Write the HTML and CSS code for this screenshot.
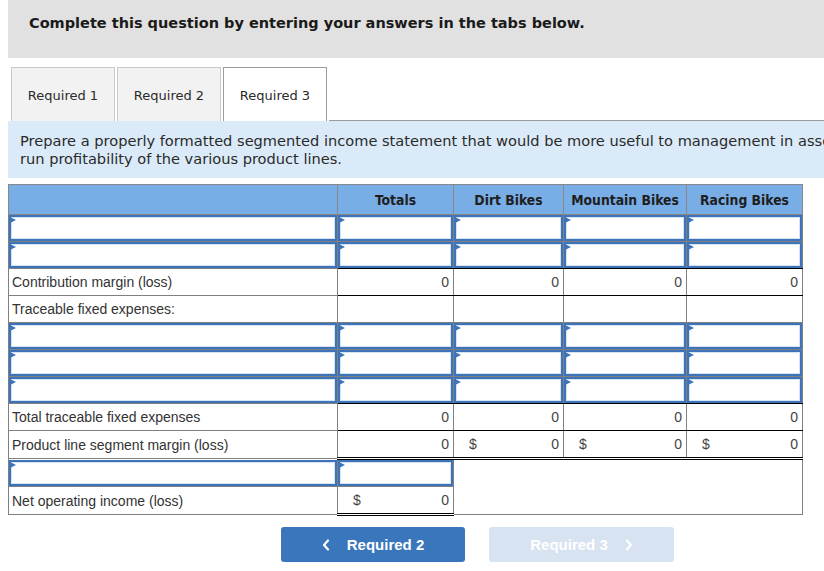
FILE: index.html
```html
<!DOCTYPE html>
<html lang="en">
<head>
<meta charset="utf-8">
<title>Segmented income statement</title>
<link rel="stylesheet" href="styles.css">
</head>
<body>
<div class="page">
  <div class="banner">Complete this question by entering your answers in the tabs below.</div>

  <div class="tabs">
    <div class="tab">Required 1</div>
    <div class="tab">Required 2</div>
    <div class="tab active">Required 3</div>
    <div class="tab-rest"></div>
  </div>

  <div class="prompt">Prepare a properly formatted segmented income statement that would be more useful to management in assessing the long-<br>run profitability of the various product lines.</div>

  <table class="stmt">
    <colgroup>
      <col class="c-label"><col class="c-tot"><col class="c-dirt"><col class="c-mtn"><col class="c-race">
    </colgroup>
    <thead>
      <tr><th></th><th>Totals</th><th>Dirt Bikes</th><th>Mountain Bikes</th><th>Racing Bikes</th></tr>
    </thead>
    <tbody>
      <tr>
        <td class="inp"><div class="box"></div></td>
        <td class="inp"><div class="box"></div></td>
        <td class="inp"><div class="box"></div></td>
        <td class="inp"><div class="box"></div></td>
        <td class="inp"><div class="box"></div></td>
      </tr>
      <tr>
        <td class="inp"><div class="box"></div></td>
        <td class="inp bb"><div class="box"></div></td>
        <td class="inp bb"><div class="box"></div></td>
        <td class="inp bb"><div class="box"></div></td>
        <td class="inp bb"><div class="box"></div></td>
      </tr>
      <tr>
        <td class="lbl">Contribution margin (loss)</td>
        <td class="num bt bb">0</td>
        <td class="num bt bb">0</td>
        <td class="num bt bb">0</td>
        <td class="num bt bb">0</td>
      </tr>
      <tr>
        <td class="lbl">Traceable fixed expenses:</td>
        <td class="num bt"></td>
        <td class="num bt"></td>
        <td class="num bt"></td>
        <td class="num bt"></td>
      </tr>
      <tr>
        <td class="inp"><div class="box"></div></td>
        <td class="inp"><div class="box"></div></td>
        <td class="inp"><div class="box"></div></td>
        <td class="inp"><div class="box"></div></td>
        <td class="inp"><div class="box"></div></td>
      </tr>
      <tr>
        <td class="inp"><div class="box"></div></td>
        <td class="inp"><div class="box"></div></td>
        <td class="inp"><div class="box"></div></td>
        <td class="inp"><div class="box"></div></td>
        <td class="inp"><div class="box"></div></td>
      </tr>
      <tr>
        <td class="inp"><div class="box"></div></td>
        <td class="inp bb"><div class="box"></div></td>
        <td class="inp bb"><div class="box"></div></td>
        <td class="inp bb"><div class="box"></div></td>
        <td class="inp bb"><div class="box"></div></td>
      </tr>
      <tr>
        <td class="lbl">Total traceable fixed expenses</td>
        <td class="num bt bb">0</td>
        <td class="num bt bb">0</td>
        <td class="num bt bb">0</td>
        <td class="num bt bb">0</td>
      </tr>
      <tr>
        <td class="lbl">Product line segment margin (loss)</td>
        <td class="num bt dbl">0</td>
        <td class="num bt dbl"><span class="cur">$</span>0</td>
        <td class="num bt dbl"><span class="cur">$</span>0</td>
        <td class="num bt dbl"><span class="cur">$</span>0</td>
      </tr>
      <tr>
        <td class="inp"><div class="box"></div></td>
        <td class="inp"><div class="box"></div></td>
        <td class="blank" colspan="3" rowspan="2"></td>
      </tr>
      <tr>
        <td class="lbl">Net operating income (loss)</td>
        <td class="num dbl"><span class="cur">$</span>0</td>
      </tr>
    </tbody>
  </table>

  <div class="nav">
    <button class="navbtn prev" type="button">
      <svg class="chev" width="8" height="12" viewBox="0 0 8 12"><polyline points="6,1.5 2,6 6,10.5" fill="none" stroke="#ffffff" stroke-width="2.2" stroke-linecap="round" stroke-linejoin="round"/></svg>
      <span>Required 2</span>
    </button>
    <button class="navbtn next" type="button" disabled>
      <span>Required 3</span>
      <svg class="chev" width="8" height="12" viewBox="0 0 8 12"><polyline points="2,1.5 6,6 2,10.5" fill="none" stroke="#ffffff" stroke-width="2.2" stroke-linecap="round" stroke-linejoin="round"/></svg>
    </button>
  </div>
</div>
</body>
</html>
```

FILE: styles.css
```css
html, body {
  margin: 0;
  padding: 0;
  background: #ffffff;
  overflow: hidden;
}

.page {
  width: 1000px;
  padding-left: 8px;
  font-family: "Liberation Sans", Arial, sans-serif;
  color: #333333;
}

.banner {
  height: 58px;
  box-sizing: border-box;
  background: #e1e1e1;
  padding: 15px 0 0 21px;
  font-family: "DejaVu Sans", Verdana, sans-serif;
  font-weight: bold;
  font-size: 14.5px;
  color: #1a1a1a;
}

.tabs {
  display: flex;
  gap: 2px;
  margin-top: 9px;
  padding-left: 3px;
  height: 54px;
}

.tab {
  width: 104px;
  box-sizing: border-box;
  border: 1px solid #c9c9c9;
  border-bottom: none;
  background: #f2f2f2;
  display: flex;
  align-items: center;
  justify-content: center;
  font-family: "DejaVu Sans", Tahoma, sans-serif;
  font-size: 13px;
  color: #2a2a2a;
  padding-top: 2px;
}

.tab.active {
  background: #ffffff;
  border-color: #9a9a9a;
}

.tab-rest {
  flex: 1;
  border-bottom: 1px solid #9a9a9a;
}

.prompt {
  background: #daeaf8;
  height: 57px;
  box-sizing: border-box;
  padding: 11px 0 0 12px;
  font-family: "DejaVu Sans", Tahoma, sans-serif;
  font-size: 14.6px;
  line-height: 18px;
  color: #2a2a2a;
  white-space: nowrap;
}

.stmt {
  margin-top: 6px;
  border-collapse: collapse;
  table-layout: fixed;
  width: 794px;
  font-size: 14px;
}

.c-label { width: 329px; }
.c-tot { width: 116px; }
.c-dirt { width: 110px; }
.c-mtn { width: 123px; }
.c-race { width: 116px; }

.stmt th {
  height: 29px;
  padding: 0;
  background: #79ade6;
  border: 1px solid #888888;
  font-family: "DejaVu Sans Condensed", "DejaVu Sans", Tahoma, sans-serif;
  font-weight: bold;
  font-size: 13.8px;
  color: #1e1e1e;
  text-align: center;
}

.stmt td {
  height: 26px;
  padding: 0;
  border: 1px solid #808080;
  vertical-align: middle;
}

.stmt td.lbl {
  padding-left: 3px;
  color: #333333;
}

.stmt td.num {
  text-align: right;
  padding-right: 4px;
  color: #444444;
}

.stmt td.bt { border-top: 1px solid #000000; }
.stmt td.bb { border-bottom: 1px solid #000000; }
.stmt td.dbl { border-bottom: 3px double #000000; }

.cur {
  float: left;
  padding-left: 15px;
}

.box {
  position: relative;
  height: 26px;
  box-sizing: border-box;
  border: 2px solid #3d74b9;
  box-shadow: inset 0 0 0 1px #d4e4f5;
  background: #ffffff;
}

.box::before {
  content: "";
  position: absolute;
  left: -1px;
  top: 0;
  border-left: 6px solid #3d74b9;
  border-top: 3.5px solid transparent;
  border-bottom: 3.5px solid transparent;
}

.stmt td.blank {
  background: #ffffff;
}

.nav {
  display: flex;
  gap: 24px;
  margin-top: 11px;
  padding-left: 273px;
}

.navbtn {
  width: 184px;
  height: 35px;
  border: none;
  border-radius: 3px;
  display: flex;
  align-items: center;
  justify-content: center;
  gap: 17px;
  font-family: "Liberation Sans", Arial, sans-serif;
  font-weight: bold;
  font-size: 15px;
  color: #ffffff;
  padding: 0;
}

.navbtn.prev {
  background: #3a76bb;
}

.navbtn.next {
  background: #d7e3f1;
  width: 185px;
}

.chev {
  display: block;
}
```
